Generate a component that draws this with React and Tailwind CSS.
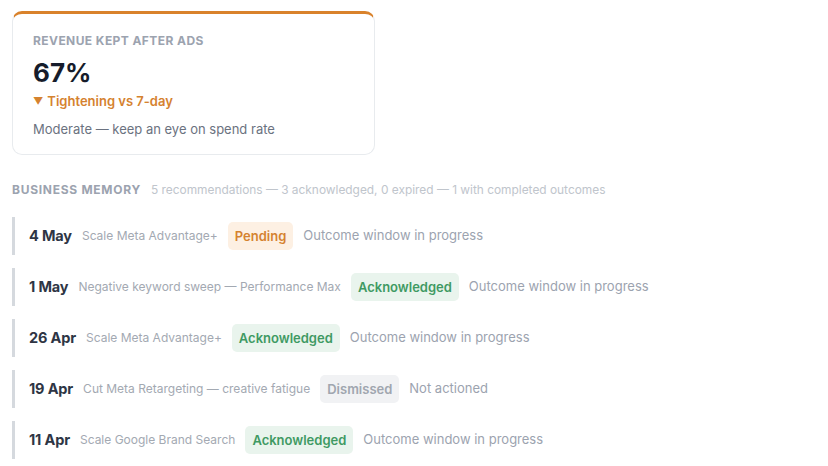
import React from "react";

const rows = [
  { date: "4 May", title: "Scale Meta Advantage+", status: "Pending", note: "Outcome window in progress" },
  { date: "1 May", title: "Negative keyword sweep — Performance Max", status: "Acknowledged", note: "Outcome window in progress" },
  { date: "26 Apr", title: "Scale Meta Advantage+", status: "Acknowledged", note: "Outcome window in progress" },
  { date: "19 Apr", title: "Cut Meta Retargeting — creative fatigue", status: "Dismissed", note: "Not actioned" },
  { date: "11 Apr", title: "Scale Google Brand Search", status: "Acknowledged", note: "Outcome window in progress" },
];

function Badge({ status }) {
  if (status === "Pending")
    return <span className="rounded-[5px] bg-[#fdf0e3] px-[7px] py-[4px] text-[13px] font-semibold leading-[20px] text-[#d5822f]">Pending</span>;
  if (status === "Dismissed")
    return <span className="rounded-[5px] bg-[#f1f2f4] px-[7px] py-[4px] text-[13px] font-semibold leading-[20px] text-[#a0a6af]">Dismissed</span>;
  return <span className="rounded-[5px] bg-[#e9f4ed] px-[7px] py-[4px] text-[13px] font-semibold leading-[20px] text-[#3f9a63]">Acknowledged</span>;
}

export default function App() {
  return (
    <div className="min-h-[466px] w-[828px] bg-white pl-3 pt-[11px]" style={{ fontFamily: "Inter, 'Noto Sans', sans-serif" }}>
      <div className="w-[363px] rounded-[10px] border border-t-[3px] border-[#e8ebee] border-t-[#d9822b] px-5 pb-4 pt-[19px]">
        <div className="text-[12px] font-bold uppercase leading-4 tracking-[0.035em] text-[#9ca3af]">Revenue kept after ads</div>
        <div className="mt-2 text-[26px] font-bold leading-8 text-[#161c2b]">67%</div>
        <div className="mt-[3px] flex items-center gap-1 text-[13px] font-semibold leading-[18px] text-[#d5822f]">
          <span className="text-[10px]">▼</span>
          <span>Tightening vs 7-day</span>
        </div>
        <div className="mt-[10px] text-[13px] leading-[18px] text-[#6b7280]">Moderate — keep an eye on spend rate</div>
      </div>

      <div className="mt-[27px] flex items-center gap-[10px] leading-4">
        <span className="text-[12px] font-bold uppercase tracking-[0.06em] text-[#9ca3af]">Business memory</span>
        <span className="text-[11.9px] text-[#c0c5cc]">5 recommendations — 3 acknowledged, 0 expired — 1 with completed outcomes</span>
      </div>

      <div className="mt-[19px] flex flex-col gap-[13px]">
        {rows.map((r, i) => (
          <div key={i} className="flex h-[38px] items-center gap-[10px] border-l-[3px] border-[#d5d9de] pl-[14px]">
            <span className="text-[14.5px] font-bold tracking-[-0.01em] text-[#2e3544]">{r.date}</span>
            <span className="text-[12px] text-[#a3a9b2]">{r.title}</span>
            <Badge status={r.status} />
            <span className="text-[13px] text-[#9ca3af]">{r.note}</span>
          </div>
        ))}
      </div>
    </div>
  );
}
